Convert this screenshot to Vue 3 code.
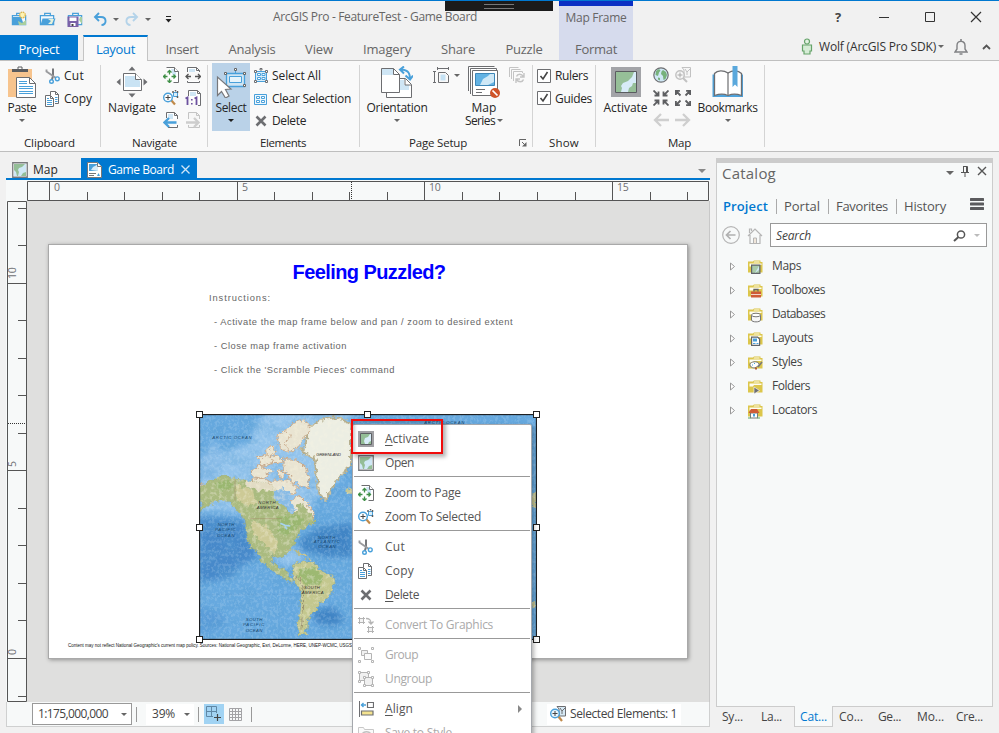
<script setup>
// Tracks a label so that it spans the given width in pixels.
const vFit = {
  mounted(el, { value }) {
    const n = el.textContent.trim().length
    const w = el.getBoundingClientRect().width
    el.style.letterSpacing = ((value - w) / n).toFixed(3) + 'px'
  },
}

const tabs = [
  { t: 'Insert', w: 68, f: 33 },
  { t: 'Analysis', w: 72, f: 47 },
  { t: 'View', w: 62, f: 28 },
  { t: 'Imagery', w: 74, f: 48 },
  { t: 'Share', w: 68, f: 34 },
  { t: 'Puzzle', w: 64, f: 37 },
]
const hTicks = [49, 87, 124, 162, 199, 237, 274, 312, 349, 387, 424, 462, 499, 537, 575, 612, 650, 687]
const vTicks = [208, 245, 283, 320, 358, 395, 433, 470, 508, 545, 583, 620, 658, 696]
const hMajor = [49, 237, 424, 612]
const vMajor = [283, 470, 658]
const hLabels = [[54, '0'], [242, '5'], [429, '10'], [617, '15']]
const vLabels = [[279, '10'], [467, '5'], [655, '0']]

const tree = [
  { t: 'Maps', i: 'maps', f: 29 },
  { t: 'Toolboxes', i: 'tbx', f: 53 },
  { t: 'Databases', i: 'db', f: 53 },
  { t: 'Layouts', i: 'lay', f: 41 },
  { t: 'Styles', i: 'sty', f: 30 },
  { t: 'Folders', i: 'fol', f: 38 },
  { t: 'Locators', i: 'loc', f: 45 },
]
const catTabs = [
  { t: 'Project', f: 45, on: true },
  { t: 'Portal', f: 36 },
  { t: 'Favorites', f: 52 },
  { t: 'History', f: 42 },
]
const dockTabs = [
  { t: 'Sy...', f: 21 },
  { t: 'La...', f: 21 },
  { t: 'Cat...', f: 27, on: true },
  { t: 'Co...', f: 24 },
  { t: 'Ge...', f: 23 },
  { t: 'Mo...', f: 27 },
  { t: 'Cre...', f: 27 },
]
const menu = [
  { k: 'A', t: 'ctivate', i: 'act', f: 44 },
  { t: 'Open', i: 'mapdoc', f: 29 },
  { sep: true },
  { t: 'Zoom to Page', i: 'zpage', f: 76 },
  { t: 'Zoom To Selected', i: 'zsel', f: 96 },
  { sep: true },
  { t: 'Cut', i: 'cut', f: 20 },
  { t: 'Copy', i: 'copy', f: 29 },
  { k: 'D', t: 'elete', i: 'del', f: 34 },
  { sep: true },
  { t: 'Convert To Graphics', i: 'conv', f: 108, off: true },
  { sep: true },
  { t: 'Group', i: 'grp', f: 33, off: true },
  { t: 'Ungroup', i: 'ungrp', f: 47, off: true },
  { sep: true },
  { k: 'A', t: 'lign', i: 'align', f: 28, sub: true },
  { t: 'Save to Style', i: 'save', f: 67, off: true },
]
const handles = [[199, 414], [367, 414], [536, 414], [199, 527], [536, 527], [199, 639], [536, 639]]
</script>

<template>
  <div class="app">
    <svg class="defs" width="0" height="0">
      <symbol id="cut" viewBox="0 0 16 16"><path d="M8 .5v7.500L6.800 12" fill="none" stroke="#77797c" stroke-width="2" /><path d="M1.500 1.500v2L11 10" fill="none" stroke="#9a9b9e" stroke-width="1.900" /><circle cx="12.300" cy="10.800" r="1.900" fill="#fff" stroke="#49a0da" stroke-width="1.400" /><circle cx="6.500" cy="13.500" r="1.800" fill="#fff" stroke="#49a0da" stroke-width="1.400" /></symbol>
      <symbol id="copy" viewBox="0 0 16 16"><path d="M5.500 4V.5h5l3 3v9H10" fill="#fff" stroke="#6d6e71" /><path d="M10.500.5v3h3" fill="none" stroke="#6d6e71" /><path d="M.5 4.500h5l3 3v8h-8z" fill="#fff" stroke="#6d6e71" /><path d="M5.500 4.500v3h3" fill="none" stroke="#6d6e71" /><path d="M2 7.500h2M2 9.500h5M2 11.500h5M2 13.500h5M10 6.500h2.500M10 8.500h2.500M10 10.500h2.500" stroke="#49a0da" /></symbol>
      <symbol id="del" viewBox="0 0 16 16"><path d="M3.500 3.500l9 9M12.500 3.500l-9 9" stroke="#6d6e71" stroke-width="2.600" /></symbol>
      <symbol id="zpage" viewBox="0 0 16 16"><path d="M3.500.5h8l4 4v11h-5" fill="#fff" stroke="#6d6e71" /><path d="M8 2h5v8h-3z" fill="#cfe6f5" /><path d="M11.500.5v4h4" fill="#fff" stroke="#6d6e71" /><path d="M6.500 4.500v10M1 9.500h11" stroke="#fff" stroke-width="3" fill="none" /><path d="M6.500 3.500v4M6.500 11.500v4M.5 9.500h4M8.500 9.500h4M4.500 5.500l2-2 2 2M4.500 13.500l2 2 2-2M2.500 7.500l-2 2 2 2M10.500 7.500l2 2-2 2" stroke="#3f8f46" stroke-width="1.300" fill="none" /></symbol>
      <symbol id="zwidth" viewBox="0 0 16 16"><path d="M2.500 5V.5h9l3 3V5M2.500 14v1.500h12V14" fill="#fff" stroke="#6d6e71" /><path d="M4 2h6v3H4z" fill="#cfe6f5" /><path d="M11.500.5v3h3" fill="none" stroke="#6d6e71" /><path d="M1 9.500h5M10 9.500h5.500M3.500 7L1 9.500 3.500 12M13 7l2.500 2.500L13 12" fill="none" stroke="#555" stroke-width="1.300" /></symbol>
      <symbol id="zsel" viewBox="0 0 16 16"><path d="M8 10l4 4.500" stroke="#c08a4a" stroke-width="2.200" /><circle cx="5" cy="7.500" r="4.300" fill="#fff" stroke="#49a0da" stroke-width="1.400" /><path d="M2.500 7.500h5M5 5v5" stroke="#444" /><path d="M10.500 2.500h4v4h-4z" fill="#d9edf9" stroke="#49a0da" /><path d="M9.500 1.500h1v1h-1zM14 1.500h1v1h-1zM14 6.500h1v1h-1zM12 .5h1v.5h-1z" fill="#fff" stroke="#555" stroke-width=".9" /></symbol>
      <symbol id="one" viewBox="0 0 16 16"><path d="M3.500 6V.5h9l3 3v12H13" fill="#fff" stroke="#6d6e71" /><path d="M5 2h6v4H5z" fill="#cfe6f5" /><path d="M12.500.5v3h3" fill="none" stroke="#6d6e71" /><path d="M.5 8.500l2-1V15M9.500 8.500l2-1V15" fill="none" stroke="#6c519f" stroke-width="1.800" /><path d="M6 9h1.600v1.600H6zM6 13h1.600v1.600H6z" fill="#6c519f" /></symbol>
      <symbol id="prev" viewBox="0 0 16 16"><path d="M3.500 6V.5h8l3 3V7M5 15.500h9.500V13" fill="#fff" stroke="#6d6e71" /><path d="M5 2h5v5H5z" fill="#cfe6f5" /><path d="M11.500.5v3h3" fill="none" stroke="#6d6e71" /><path d="M1.500 10.500h12M6 6l-4.500 4.500L6 15" fill="none" stroke="#49a0da" stroke-width="2.400" /></symbol>
      <symbol id="next" viewBox="0 0 16 16"><path d="M3.500 7V.5h8l3 3V7M3.500 13v2.500h11V13" fill="#f6f6f6" stroke="#c4c4c4" /><path d="M11.500.5v3h3" fill="none" stroke="#c4c4c4" /><path d="M1 10.500h12.500M9 6l4.500 4.500L9 15" fill="none" stroke="#cdcdcd" stroke-width="2.400" /></symbol>
      <symbol id="selall" viewBox="0 0 16 16"><path d="M2.500 3.500h11v10h-11z" fill="#d9edf9" stroke="#49a0da" /><path d="M4.500 5.500h3v2h-3zM9 5.500h3v2H9zM4.500 9.500h3v2h-3zM9 9.500h3v2H9z" fill="#fff" stroke="#49a0da" /><path d="M1.500 2.500h2v2h-2zM12.500 2.500h2v2h-2zM1.500 12.500h2v2h-2zM12.500 12.500h2v2h-2zM7 .5h2v1.500H7z" fill="#fff" stroke="#6d6e71" /></symbol>
      <symbol id="clr" viewBox="0 0 16 16"><path d="M1.500 3.500h12v10h-12z" fill="#eef7fd" stroke="#49a0da" /><path d="M3.500 5.500h3v2h-3zM8.500 5.500h3v2h-3zM3.500 9.500h3v2h-3zM8.500 9.500h3v2h-3z" fill="#fff" stroke="#49a0da" /></symbol>
      <symbol id="act" viewBox="0 0 16 16"><path d="M0 0h16v16H0z" fill="#a0a0a4" /><path d="M2.500 2.500h11v11h-11z" fill="#d9edf9" stroke="#5d6063" /><path d="M3 3h9l-2 3-3 1-1 3 1 3H3zM10 13l1-2 2-1v3z" fill="#94be97" /></symbol>
      <symbol id="mapdoc" viewBox="0 0 16 16"><path d="M.75.75h14.500v14.500H.75z" fill="#fff" stroke="#77797c" stroke-width="1.300" /><path d="M2 2h12v12H2z" fill="#d0e8f6" /><path d="M2 2h11l-3 3-3 1-1 2 1 2-1 4H5L4 10 2 8zM9 14l2-3 3-1v4z" fill="#94be97" /></symbol>
      <symbol id="conv" viewBox="0 0 16 16"><g fill="#f3f3f3" stroke="#b4b4b4"><path d="M1.500 1.500h4v4h-4zM10.500 10.500h4v4h-4z" /><path d="M0 1.500h7M0 5.500h7M1.500 0v7M5.500 0v7M9 10.500h7M9 14.500h7M10.500 9v7M14.500 9v7" /><path d="M8 1.500c4 0 5 1.500 5 5M10.500 4.500L13 7l2.500-2.500" fill="none" stroke-width="1.300" /></g></symbol>
      <symbol id="grp" viewBox="0 0 16 16"><g fill="#f0f0f0" stroke="#b4b4b4"><path d="M3.500 3.500h6v5h-6z" /><path d="M6.500 6.500h7v6h-7z" fill="#fafafa" /><path d="M.5.5h2v2h-2zM13.500.5h2v2h-2zM.5 13.500h2v2h-2zM13.500 13.500h2v2h-2z" fill="#fff" /></g></symbol>
      <symbol id="ungrp" viewBox="0 0 16 16"><g fill="#f0f0f0" stroke="#b4b4b4"><path d="M1.500 1.500h9v8h-9z" /><path d="M6.500 6.500h8v8h-8z" /><path d="M.5.5h2v2h-2zM9.500.5h2v2h-2zM.5 9.500h2v2h-2zM13.500 5.500h2v2h-2zM5.500 13.500h2v2h-2zM13.500 13.500h2v2h-2zM5.500 5.500h2v2h-2z" fill="#fff" /></g></symbol>
      <symbol id="align" viewBox="0 0 16 16"><path d="M1.500 0v16" stroke="#6d6e71" /><path d="M9.500 1.500h6v5h-6z" fill="#fff" stroke="#6d6e71" stroke-width="1.200" /><path d="M3.500 10h11.500v4H3.500z" fill="#f4e390" stroke="#6d6e71" stroke-width="1.200" /><path d="M3 4h5M5.500 2L3.500 4l2 2" fill="none" stroke="#49a0da" stroke-width="1.400" /></symbol>
      <symbol id="save" viewBox="0 0 16 16"><path d="M.5 14V2.500h5l1 2h9V14" fill="#fafafa" stroke="#c8c8c8" /><path d="M4 9c2-3 7-3 9 0" fill="none" stroke="#c0c0c0" stroke-width="1.500" /></symbol>
      <symbol id="selmap" viewBox="0 0 16 16"><path d="M7 .5h8.500V10H9V3z" fill="#d6e9f5" stroke="#6d6e71" /><path d="M10 2l2 3 3-3M12 5v3" fill="none" stroke="#6d6e71" /><path d="M8 10l4 5" stroke="#c08a4a" stroke-width="2.200" /><circle cx="5" cy="7.500" r="4.300" fill="#e9f5fc" stroke="#49a0da" stroke-width="1.400" /><path d="M2.500 7.500h5M5 5v5" stroke="#444" /></symbol>
      <symbol id="selmapoff" viewBox="0 0 16 16"><g fill="#f6f6f6" stroke="#c2c2c2"><path d="M7 .5h8.500V10H9V3z" /><path d="M10 2l2 3 3-3M12 5v3" fill="none" /><path d="M8 11l4 4" stroke-width="2" /><circle cx="5" cy="8" r="4.200" stroke-width="1.400" /><path d="M2.500 8h5M5 5.500v5" stroke="#aaa" /></g></symbol>
      <symbol id="globe" viewBox="0 0 16 16"><circle cx="8" cy="8" r="7.200" fill="#cfe7f5" stroke="#6d6e71" stroke-width="1.200" /><path d="M3 4l3-2 1.500 1.500-1.500 2-1 3.500-2.500-1zM10 3l3 2 1 3-1.500 4-2 1-.5-4-2-2 .500-2.500zM5 10.500l2 .5v2.500L5 12.500z" fill="#77b27c" /></symbol>
      <symbol id="zin" viewBox="0 0 16 16"><path d="M.5.5l5 5M15.500.5l-5 5M.5 15.500l5-5M15.500 15.500l-5-5M1.500 5.500h4v-4M14.500 5.500h-4v-4M1.500 10.500h4v4M14.500 10.500h-4v4" fill="none" stroke="#5d5e61" stroke-width="1.800" /></symbol>
      <symbol id="zout" viewBox="0 0 16 16"><path d="M1 1l4.500 4.500M15 1l-4.500 4.500M1 15l4.500-4.500M15 15l-4.500-4.500M.9 4.900v-4h4M15.100 4.900v-4h-4M.9 11.100v4h4M15.100 11.100v4h-4" fill="none" stroke="#5d5e61" stroke-width="1.800" /></symbol>
      <symbol id="left" viewBox="0 0 16 16"><path d="M2 8h14M8 2L2 8l6 6" fill="none" stroke="#cfcfcf" stroke-width="2.300" /></symbol>
      <symbol id="right" viewBox="0 0 16 16"><path d="M0 8h14M8 2l6 6-6 6" fill="none" stroke="#cfcfcf" stroke-width="2.300" /></symbol>
      <symbol id="margin" viewBox="0 0 17 16"><path d="M4 1.500h12M4.500 0v3M15.500 0v3M1.500 4v11M0 4.500h3M0 15.500h3M5.500 5.500h7l3 3v7h-10z" fill="none" stroke="#6d6e71" /><path d="M7.500 7.500h5v6h-5z" fill="#c6e2f4" /></symbol>
      <symbol id="refresh" viewBox="0 0 16 16"><g fill="#fafafa" stroke="#c4c4c4"><path d="M.5 10V.5h9M2.500 12V2.500h9M4.500 14V4.500h9V6" /><path d="M7.500 9.500c1-3 5-3 7 0M15 6v4h-4M14.500 12.500c-1 3-5 3-7 0M7 16v-4h4" fill="none" stroke-width="1.400" /></g></symbol>
      <symbol id="folder" viewBox="0 0 16 16"><path d="M1 2.500h5l1-1h6.500V3h2v10.500H1z" fill="#dcc64b" /><path d="M6.500 3.500l.8-1H12.500v1zM2.500 4.500h12V6H7L6 7.500H2.500z" fill="#fffdf0" /></symbol>
      <symbol id="maps" viewBox="0 0 16 16"><use href="#folder" /><path d="M4.600 6.100h8.300v8.300H4.600z" fill="#a9cba9" stroke="#60646a" stroke-width="1.200" /><path d="M12 7v4l-4 3z" fill="#cfe8f5" /></symbol>
      <symbol id="tbx" viewBox="0 0 16 16"><use href="#folder" /><path d="M4 8.500h10v6H4z" fill="#cf5c37" /><path d="M7 8.500v-2h4v2" fill="none" stroke="#666" stroke-width="1.300" /><path d="M4 11.500h10" stroke="#f2d4c8" /></symbol>
      <symbol id="db" viewBox="0 0 16 16"><use href="#folder" /><path d="M4.500 8v5c0 2.500 9 2.500 9 0V8" fill="#f6f6f6" stroke="#777" /><ellipse cx="9" cy="8" rx="4.500" ry="1.800" fill="#fff" stroke="#777" /></symbol>
      <symbol id="lay" viewBox="0 0 16 16"><use href="#folder" /><path d="M4.600 6.100h6l2 2v6.300h-8z" fill="#fff" stroke="#60646a" stroke-width="1.200" /><path d="M6 7.500h4v3H6z" fill="#49a0da" /><path d="M6 12.500h2.500M9.500 12.500h2" stroke="#49a0da" /></symbol>
      <symbol id="sty" viewBox="0 0 16 16"><use href="#folder" /><path d="M3 9.500c0-3 8-4 9-.500.500 3-2 1.500-2.500 3s-6.500 1.500-6.500-2.500z" fill="#fff" stroke="#777" /><path d="M15 7l-4 5" stroke="#777" stroke-width="1.500" /><path d="M8 12.500h2v2H8z" fill="#b25c35" /><path d="M5 9.500h1v1H5zM7 8h1v1H7z" fill="#49a0da" /></symbol>
      <symbol id="fol" viewBox="0 0 16 16"><use href="#folder" /><path d="M7 8l5.500 3.500L7 15z" fill="#6d6e71" stroke="#fff" stroke-width=".6" /></symbol>
      <symbol id="loc" viewBox="0 0 16 16"><use href="#folder" /><path d="M3.500 10h7v5h-7z" fill="#fff" stroke="#777" /><path d="M1.500 10L4 6h6l2.500 4z" fill="#cf5c37" /><path d="M6 11h2v2.500H6z" fill="#49a0da" /><path d="M1 15h3M10 15h3" stroke="#5fa765" stroke-width="1.200" /></symbol>
      <symbol id="brief" viewBox="0 0 18 16"><path d="M6 4.500V2h6v2.500" fill="none" stroke="#49a0da" stroke-width="1.300" /><path d="M1.500 4.500h14V14h-14z" fill="#f4f9fc" stroke="#49a0da" stroke-width="1.300" /></symbol>
    </svg>

    <header class="title">
      <div class="qat">
        <svg width="17" height="16"><use href="#brief" /><path d="M1 6h9l3 8H1z" fill="#49a0da" /><path d="M7 10l4 2 4-3v5H8z" fill="#a9cf9f" /><circle cx="11.500" cy="4" r="2.800" fill="#fdf3b4" stroke="#dfb548" stroke-width="1.300" stroke-dasharray="1.500 .7" /></svg>
        <svg width="17" height="16"><use href="#brief" /><path d="M3.500 7.500h13L14 14H1.500z" fill="#49a0da" /><path d="M9 8h6l-2 5H9l3-3z" fill="#e4f1dc" /></svg>
        <svg width="17" height="16"><use href="#brief" /><path d="M.5 5.500h11V16H.5z" fill="#7a62a8" /><path d="M2.500 6.500h7V10h-7zM3.500 12h5v3h-5z" fill="#fff" /><path d="M4.500 13h2v2h-2z" fill="#444" /><path d="M13 6l-1 3 3 4V6z" fill="#a9cf9f" /></svg>
        <svg width="14" height="14" class="undo"><path d="M2 5h6c6 0 6 8 .500 8M6 1L2 5l4 4" fill="none" stroke="#49a0da" stroke-width="1.900" /></svg>
        <i class="dn"></i>
        <svg width="14" height="14" class="redo"><path d="M12 5H6C0 5 0 13 5.500 13M8 1l4 4-4 4" fill="none" stroke="#b4d3e9" stroke-width="1.900" /></svg>
        <i class="dn"></i>
        <svg width="7" height="7" class="cust"><path d="M1 .5h5" stroke="#222" /><path d="M.5 3h6l-3 3.500z" fill="#222" /></svg>
      </div>
      <div class="caption"><span v-fit="204">ArcGIS Pro - FeatureTest - Game Board</span></div>
      <div class="win">
        <span class="help">?</span>
        <svg width="12" height="12"><path d="M1 6.500h10" stroke="#333" /></svg>
        <svg width="12" height="12"><path d="M1.500 1.500h9v9h-9z" fill="none" stroke="#333" /></svg>
        <svg width="12" height="12"><path d="M1 1l10 10M11 1L1 11" stroke="#333" stroke-width="1.200" /></svg>
      </div>
      <div class="grip"></div>
      <div class="context"><span v-fit="61">Map Frame</span></div>
    </header>

    <nav class="tabs">
      <div class="tab file"><span v-fit="41">Project</span></div>
      <div class="tab cur"><span v-fit="39">Layout</span></div>
      <div v-for="t in tabs" :key="t.t" class="tab" :style="{ width: t.w + 'px' }"><span v-fit="t.f">{{ t.t }}</span></div>
      <div class="tab format"><span v-fit="42">Format</span></div>
      <div class="user">
        <svg width="12" height="17"><circle cx="6" cy="3.500" r="2.500" fill="#e2f1e2" stroke="#66a36a" stroke-width="1.200" /><path d="M1.500 7h9v6h-1.500v3h-6v-3H1.500z" fill="#d6ecd6" stroke="#66a36a" stroke-width="1.200" /></svg>
        <span class="uname" v-fit="117">Wolf (ArcGIS Pro SDK)</span>
        <i class="dn"></i>
        <svg width="14" height="16" class="bell"><path d="M1 13h12l-2-3V6.500C11 1 3 1 3 6.500V10z" fill="none" stroke="#808184" stroke-width="1.400" /><path d="M5.500 15h3M7 0v2" stroke="#808184" stroke-width="1.600" /></svg>
        <svg width="9" height="6" class="caret"><path d="M1 5l3.500-3.500L8 5" fill="none" stroke="#555" stroke-width="1.800" /></svg>
      </div>
    </nav>

    <section class="ribbon">
      <div class="group g1">
        <div class="body">
          <div class="big paste">
            <svg width="30" height="32"><path d="M1 3h24v28H1z" fill="#f7c48e" /><path d="M5 3h16v3H5z" fill="#5b5c5f" /><path d="M11 3V1h4v2" fill="#fff" stroke="#5b5c5f" /><path d="M9.500 11.500h13l6 6v14h-19z" fill="#fff" stroke="#6d6e71" /><path d="M22.500 11.500v6h6" fill="none" stroke="#6d6e71" /><path d="M12 15.500h8M12 17.500h8M12 20.500h14M12 22.500h14M12 25.500h14M12 27.500h14" stroke="#49a0da" /></svg>
            <b v-fit="29">Paste</b><i class="dn"></i>
          </div>
          <div class="rows">
            <div><svg width="16" height="16"><use href="#cut" /></svg><span v-fit="20">Cut</span></div>
            <div><svg width="16" height="16"><use href="#copy" /></svg><span v-fit="28">Copy</span></div>
          </div>
        </div>
        <footer><span v-fit="51">Clipboard</span></footer>
      </div>
      <div class="group g2">
        <div class="body">
          <div class="big nav">
            <svg width="32" height="32"><path d="M7.500 7.500h12l6 6v11h-18z" fill="#fff" stroke="#6d6e71" /><path d="M9 10h10l5 5v6H9z" fill="#c9e3f4" /><path d="M19.500 7.500v6h6" fill="#fff" stroke="#6d6e71" /><path d="M12.500 4.500L16 .5l3.500 4zM12.500 27.500L16 31.500l3.500-4zM4.500 12.500L.5 16l4 3.500zM27.500 12.500l4 3.500-4 3.500z" fill="#6d6e71" /></svg>
            <b v-fit="48">Navigate</b>
          </div>
          <div class="icons">
            <svg v-for="i in ['zpage', 'zwidth', 'zsel', 'one', 'prev', 'next']" :key="i" width="16" height="16"><use :href="'#' + i" /></svg>
          </div>
        </div>
        <footer><span v-fit="45">Navigate</span></footer>
      </div>
      <div class="group g3">
        <div class="body">
          <div class="big sel">
            <svg width="32" height="32"><path d="M11.500 7.500h18v13h-18z" fill="#cfe5f4" stroke="#49a0da" stroke-width="1.300" /><path d="M14.500 10.500h12v6h-12z" fill="#e8f4fb" stroke="#49a0da" /><path d="M20.500 4v3" stroke="#49a0da" /><path d="M9.500 6.500h2v2h-2zM28.500 6.500h2v2h-2zM28.500 18.500h2v2h-2zM19.500 2.500h2v2h-2z" fill="#fff" stroke="#666" /><path d="M2.500 11v18.500l4-4 4 6.500 3.500-2-3.500-6.500 5.500-.5z" fill="#fff" stroke="#77787b" stroke-width="1.200" /></svg>
            <b v-fit="31">Select</b><i class="dn dark"></i>
          </div>
          <div class="rows">
            <div><svg width="16" height="16"><use href="#selall" /></svg><span v-fit="49">Select All</span></div>
            <div><svg width="16" height="16"><use href="#clr" /></svg><span v-fit="79">Clear Selection</span></div>
            <div><svg width="16" height="16"><use href="#del" /></svg><span v-fit="34">Delete</span></div>
          </div>
        </div>
        <footer><span v-fit="46">Elements</span></footer>
      </div>
      <div class="group g4">
        <div class="body">
          <div class="big orient">
            <svg width="32" height="32"><path d="M5.500 20v11.500h25v-13l-6-6h-7" fill="#fff" stroke="#6d6e71" /><path d="M19 14h4v5h5v5h-9z" fill="#cfe6f5" /><path d="M.5 2.500h12l6 6v18H.5z" fill="#fff" stroke="#6d6e71" /><path d="M1 3h11v6H1z" fill="#cfe6f5" /><path d="M12.500 2.500v6h6M24 13v6h6" fill="none" stroke="#6d6e71" /><path d="M20 3.500c7 .5 9 3 9 10M23 .5l-4 3 4 4M24.500 9.500l4.500 4L32 9.500" fill="none" stroke="#49a0da" stroke-width="2" /></svg>
            <b v-fit="61">Orientation</b><i class="dn"></i>
          </div>
          <div class="marg"><svg width="17" height="16"><use href="#margin" /></svg><i class="dn"></i></div>
          <div class="big series">
            <svg width="32" height="32"><path d="M.5 25V.5h26M2.500 28V2.500h26v2M4.500 4.500h25v25h-25z" fill="#fff" stroke="#6d6e71" /><path d="M7.500 7.500h19v12h-19z" fill="#62b2e3" stroke="#3e87b8" /><path d="M12 19l3-6 5-3 2-2h4v8l-6 3z" fill="#cfe8f6" /><path d="M8 23.500h9M8 26.500h6" stroke="#6d6e71" /><circle cx="27" cy="27" r="5" fill="#cf5328" /><path d="M24.500 24.500l5 5" stroke="#fff" stroke-width="1.700" /></svg>
            <b v-fit="25">Map</b><b class="two"><span v-fit="30">Series</span><i class="dn"></i></b>
          </div>
          <svg width="16" height="16" class="refr"><use href="#refresh" /></svg>
        </div>
        <footer><span v-fit="58">Page Setup</span><svg width="8" height="8" class="launch"><path d="M.5 7V.5H7M3 3l3 3" fill="none" stroke="#666" /><path d="M7.500 3v4.500H3z" fill="#666" /></svg></footer>
      </div>
      <div class="group g5">
        <div class="body">
          <div class="rows">
            <div><svg width="14" height="14" class="chk"><path d="M.5.5h13v13H.5z" fill="#fff" stroke="#6d6e71" /><path d="M3.500 7l2.500 3 4.500-7" fill="none" stroke="#444" stroke-width="1.600" /></svg><span v-fit="33">Rulers</span></div>
            <div><svg width="14" height="14" class="chk"><path d="M.5.5h13v13H.5z" fill="#fff" stroke="#6d6e71" /><path d="M3.500 7l2.500 3 4.500-7" fill="none" stroke="#444" stroke-width="1.600" /></svg><span v-fit="37">Guides</span></div>
          </div>
        </div>
        <footer><span v-fit="30">Show</span></footer>
      </div>
      <div class="group g6">
        <div class="body">
          <div class="big activate">
            <svg width="30" height="32" viewBox="0 0 30 32"><path d="M0 1h30v30H0z" fill="#a3a4a8" /><path d="M4.500 5.500h21v21h-21z" fill="#d8ecf8" stroke="#5a5c60" /><path d="M5 6h18l-2 5-4 4-5 2-2 3 1 2-1 4H5zM17 26l1-4 3-2 1-3h3v9z" fill="#96bf98" /></svg>
            <b v-fit="44">Activate</b>
          </div>
          <div class="icons">
            <svg v-for="i in ['globe', 'selmapoff', 'zin', 'zout', 'left', 'right']" :key="i" width="16" height="16"><use :href="'#' + i" /></svg>
          </div>
          <div class="big books">
            <svg width="32" height="32"><path d="M.5 8.500h4V28H28V8.500h3v22.500H.5z" fill="#4fa3dc" /><path d="M2.500 7.500c3-3.500 9-3.500 13.500-.5 4.500-3 10-3 13.500.5V29.500c-4-1.500-9-2-13.500 0-4.500-2-9-1.500-13.500 0z" fill="#fff" stroke="#6d6e71" stroke-width="1.300" /><path d="M16 7v22" stroke="#6d6e71" stroke-width="1.200" /><path d="M20.500 0h5v21l-2.500-2.500-2.500 2.500z" fill="#5aa8dc" /></svg>
            <b v-fit="60">Bookmarks</b><i class="dn"></i>
          </div>
        </div>
        <footer><span v-fit="23">Map</span></footer>
      </div>
    </section>

    <main>
      <section class="doc">
        <div class="doctabs">
          <div class="dt"><svg width="16" height="16"><use href="#mapdoc" /></svg><span v-fit="25">Map</span></div>
          <div class="dt on"><svg width="16" height="16"><path d="M.5.5h10l4 4v11H.5z" fill="#fff" stroke="#777" /><path d="M2 2h9v7H2z" fill="#49a0da" /><path d="M4 8l2-3 2-1 3-2v7z" fill="#d6ebf8" /><path d="M10.500.5v4h4" fill="#fff" stroke="#777" /><path d="M2 11.500h7M2 13.500h5" stroke="#777" /><path d="M10 14l1.500-3 1.500 3z" fill="#49a0da" /></svg><span v-fit="66">Game Board</span><svg width="9" height="9" class="x"><path d="M.5.5l8 8M8.500.5l-8 8" stroke="#cfe6f7" stroke-width="1.300" /></svg></div>
          <i class="dn more"></i>
        </div>
        <div class="view">
          <svg class="hruler" width="704" height="21" viewBox="6 180 704 21">
            <rect x="6" y="180" width="704" height="21" fill="#f7f9f9" />
            <path d="M27.500 181.500h681v19h-681z" fill="none" stroke="#555" />
            <path v-for="x in hTicks" :key="x" :d="`M${x + 0.5} ${hMajor.includes(x) ? 181 : 192}V200`" stroke="#555" />
            <path d="M351.500 182v18" stroke="#333" stroke-dasharray="1 1" />
            <text v-for="l in hLabels" :key="l[0]" :x="l[0]" y="191" class="rl">{{ l[1] }}</text>
          </svg>
          <div class="mid">
            <svg class="vruler" width="21" height="501" viewBox="6 201 21 501">
              <rect x="6" y="201" width="21" height="501" fill="#f7f9f9" />
              <path d="M7.500 201.500h19v500h-19z" fill="none" stroke="#555" />
              <path v-for="y in vTicks" :key="y" :d="`M${vMajor.includes(y) ? 8 : 18} ${y + 0.5}H26`" stroke="#555" />
              <path d="M8 423.500h18" stroke="#333" stroke-dasharray="1 1" />
              <text v-for="l in vLabels" :key="l[0]" :transform="`translate(16 ${l[0]}) rotate(-90)`" class="rl">{{ l[1] }}</text>
            </svg>
            <div class="canvas">
              <article class="page">
                <h1><span v-fit="153">Feeling Puzzled?</span></h1>
                <p class="first"><span v-fit="62">Instructions:</span></p>
                <p><span v-fit="299">- Activate the map frame below and pan / zoom to desired extent</span></p>
                <p><span v-fit="133">- Close map frame activation</span></p>
                <p><span v-fit="181">- Click the 'Scramble Pieces' command</span></p>
                <svg class="map" width="338" height="226" viewBox="28 42 1014 678" preserveAspectRatio="none">
                  <defs>
                    <filter id="sea" x="0" y="0" width="100%" height="100%"><feTurbulence type="fractalNoise" baseFrequency="0.02 0.03" numOctaves="6" seed="8" /><feColorMatrix values="0 0 0 0 .1  0 0 0 0 .35  0 0 0 0 .65  5 0 0 0 -2.200" /></filter>
                    <filter id="foam" x="0" y="0" width="100%" height="100%"><feTurbulence type="fractalNoise" baseFrequency="0.12 0.1" numOctaves="3" seed="21" /><feColorMatrix values="0 0 0 0 .75  0 0 0 0 .88  0 0 0 0 .98  0 5 0 0 -2.300" /></filter>
                    <filter id="land" x="-5%" y="-5%" width="110%" height="110%"><feTurbulence type="fractalNoise" baseFrequency="0.08" numOctaves="4" seed="3" result="n" /><feDisplacementMap in="SourceGraphic" in2="n" scale="20" xChannelSelector="R" yChannelSelector="G" result="d" /><feColorMatrix in="n" values="0 0 0 0 .95  0 0 0 0 .92  0 0 0 0 .75  0 0 4 0 -1.900" result="s" /><feComposite in="s" in2="d" operator="in" result="t" /><feComponentTransfer in="t" result="u"><feFuncA type="linear" slope=".28" /></feComponentTransfer><feMerge><feMergeNode in="d" /><feMergeNode in="u" /></feMerge></filter>
                    <filter id="soft"><feGaussianBlur stdDeviation="9" /></filter>
                  </defs>
                  <rect x="28" y="42" width="1014" height="678" fill="#67a9df" />
                  <g filter="url(#soft)">
                    <path d="M28 340q80-20 150 10l30 90 80 60 60-20-60-60 60-60 40-80 60-40 20-150 40-80H260l-60 60-20 60-60 20-92 30z" fill="#94c4ec" />
                    <path d="M28 350l130 10 50 110-60 30-20 30-100 20z" fill="#4789ca" />
                    <path d="M330 420l60-40 98-10v100l-80 0-70-20z" fill="#4184c5" />
                    <path d="M370 630l60-10 38 40-40 20-50-10z" fill="#4184c5" />
                    <path d="M28 180l50-60 20 60-30 60-40 0z" fill="#8bbde8" />
                    <path d="M28 620l70 20 10 40-80 20z" fill="#5a9cd8" />
                  </g>
                  <rect x="28" y="42" width="1014" height="678" filter="url(#sea)" opacity=".24" />
                  <rect x="28" y="42" width="1014" height="678" filter="url(#foam)" opacity=".16" />
                  <path d="M28 262h460M28 448h460M28 583h460" stroke="#4b83b5" stroke-dasharray="8 5" opacity=".6" />
                  <g filter="url(#land)" stroke-linejoin="round">
                    <path d="M348 90q50-45 100-36l36 18v124l-30 30-24 30-22 46-18-20-10-54-4-50-40-24 14-30z" fill="#eceee3" stroke="#b6af8e" stroke-width="6" />
                    <g fill="#e9e4d2" stroke="#c9a989" stroke-width="3">
                      <path d="M292 84l36-25 30 8 2 30-22 20-12 28-24 12-20-22 16-20-18-14z" />
                      <path d="M262 110l24-20 14 20-14 20 8 24-24-8zM228 150l20-12 12 20-30 14zM206 170l28-4 16 20-34 14zM240 168l30-2 10 22-34 4zM184 210l30-16 34 20-26 22-34-6zM188 234l40 2 20 12-50 8z" />
                      <path d="M284 174l34 6 30 24 12 30-6 30-34-16-20 6 4-24-22-16zM262 208l22 6-10 22z" />
                      <path d="M236 244l60-2 30 20-10 18-44 6-24-20z" />
                      <path d="M308 300l20-14 30 28 20 32-34 12-30-20-16-30z" />
                      <path d="M30 250l16 4 6 20-22-8z" />
                    </g>
                    <path d="M66 244l30-18 44 12 60 6 40 8 20 18 28 16-4 28 20 30 16-8 10-30 22 24 28 38-30 10-22 24-14 30-20 22-12 12-16 6-20-10 4 30 22 10 14 0 4 20 22 18-6 10-30-20-30-20-28-24-18-36-20-10-12-50-4-30-30-40-20-16-40 0-40 26-24 6 30-20-14-20 2-20-14-10z" fill="#aabb80" stroke="#98a56f" stroke-width="1.500" />
                    <path d="M140 254l50 20 10 34-30 10-30-22zM186 366l40 8 40 50-10 40-50-50-20-24z" fill="#cdca96" />
                    <path d="M170 240l70 10 20 20-50 2-40-10z" fill="#e2dcc4" />
                    <path d="M262 350l60-6 24 16-30 30-30 20-20-10zM74 250l40-10 20 20-40 16z" fill="#9ab770" />
                    <path d="M252 274l20-10 30 10-6 24 20 30-6 10-20-20-20-6-14-16z" fill="#87bbe5" />
                    <path d="M312 492l26-10 40 6 10 20 46 24 2 20-20 40-26 20-12 20-16 14-10 24-4 26 8 8-28 0-4-30 8-60 4-40-24-34-4-24z" fill="#c3c78e" stroke="#98a56f" stroke-width="1.500" />
                    <path d="M332 506l44-6 24 28-10 26-40 4-26-30z" fill="#9db972" />
                    <path d="M318 520l24 46 0 50-8 70" stroke="#978c6a" stroke-width="3" fill="none" />
                    <path d="M290 450l30 2 14 10M324 464l24 4 12 12" stroke="#b9b982" stroke-width="5" fill="none" />
                    <path d="M468 264l22 4v14l-18-2zM1022 282l20-8v50l-18-4zM1024 600l16 10-14 16z" fill="#c6c794" />
                  </g>
                  <path d="M136 238v64M182 356h96" stroke="#a27f62" stroke-width="1.500" opacity=".8" fill="none" />
                  <path d="M272 370l14 6 16 2M286 380l6 8" stroke="#a7d3ef" stroke-width="5" fill="none" />
                  <g class="maplbl">
                    <text x="68" y="116" textLength="118">ARCTIC OCEAN</text>
                    <text x="380" y="167" textLength="74" class="dk">GREENLAND</text>
                    <text x="206" y="313" textLength="52" class="dk">NORTH</text><text x="201" y="327" textLength="66" class="dk">AMERICA</text>
                    <text x="84" y="377" textLength="50">NORTH</text><text x="76" y="394" textLength="62">PACIFIC</text><text x="82" y="412" textLength="52">OCEAN</text>
                    <text x="385" y="416" textLength="52">NORTH</text><text x="372" y="430" textLength="78">ATLANTIC</text><text x="386" y="445" textLength="52">OCEAN</text>
                    <text x="343" y="568" textLength="48" class="dk">SOUTH</text><text x="336" y="581" textLength="66" class="dk">AMERICA</text>
                    <text x="168" y="662" textLength="50">SOUTH</text><text x="160" y="679" textLength="64">PACIFIC</text><text x="168" y="696" textLength="50">OCEAN</text>
                    <text x="704" y="73" textLength="120">ARCTIC OCEAN</text>
                  </g>
                  <rect x="29.500" y="43.500" width="1011" height="675" fill="none" stroke="#1d1f22" stroke-width="4" />
                </svg>
                <div class="credit"><span v-fit="342">Content may not reflect National Geographic's current map policy. Sources: National Geographic, Esri, DeLorme, HERE, UNEP-WCMC, USGS, NASA, ESA, METI, NRCAN</span></div>
              </article>
            </div>
          </div>
        </div>
        <div class="status">
          <div class="scale"><span v-fit="70">1:175,000,000</span><i class="dn"></i></div>
          <hr>
          <div class="pct"><span v-fit="23">39%</span><i class="dn"></i></div>
          <hr>
          <div class="snap"><svg width="20" height="20"><path d="M2.500 2.500h10v10h-10zM7.500 2.500v10M2.500 7.500h10" fill="none" stroke="#5f88a6" /><path d="M9 9h8v8H9z" fill="#a1d3f3" /><path d="M13.500 10v7M10 13.500h7" stroke="#444" stroke-width="1.200" /></svg></div>
          <svg width="13" height="13" class="grid"><path d="M.5.5h12v12H.5zM3.500 0v13M6.500 0v13M9.500 0v13M0 3.500h13M0 6.500h13M0 9.500h13" fill="none" stroke="#a3a3a6" /></svg>
          <hr>
          <div class="count"><svg width="16" height="16"><use href="#selmap" /></svg><span v-fit="107">Selected Elements: 1</span></div>
        </div>
      </section>

      <aside>
        <div class="panel">
          <div class="ptitle"><span v-fit="54">Catalog</span>
            <i class="dn"></i>
            <svg width="8" height="11"><path d="M2 .5h4.500v6M2.500 0v7M0 6.500h8M4 7v4M5.500 1v6" fill="none" stroke="#555" /></svg>
            <svg width="10" height="10"><path d="M1 1l8 8M9 1L1 9" stroke="#555" stroke-width="1.400" /></svg>
          </div>
          <div class="ptabs">
            <span v-for="c in catTabs" :key="c.t" class="pt" :class="{ on: c.on }"><span v-fit="c.f">{{ c.t }}</span></span>
            <svg width="14" height="14"><path d="M1 2.500h12M1 7h12M1 11.500h12" stroke="#5b5b5e" stroke-width="3" stroke-linecap="round" /></svg>
          </div>
          <div class="psearch">
            <svg width="18" height="18"><circle cx="9" cy="9" r="8.300" fill="none" stroke="#b5b5b5" stroke-width="1.200" /><path d="M4.500 9h9M8.500 5l-4 4 4 4" fill="none" stroke="#b0b0b0" stroke-width="1.700" /></svg>
            <svg width="16" height="17" class="home"><path d="M1 9l7-7 7 7M3 8v8.500h10V8M2.500 6V2h2v2" fill="none" stroke="#b5b5b5" stroke-width="1.200" /><path d="M6.500 16v-5h3v5" fill="#f0e6da" stroke="#b5b5b5" /></svg>
            <div class="box"><em v-fit="35">Search</em><svg width="13" height="12"><circle cx="8" cy="4.500" r="3.600" fill="none" stroke="#555" stroke-width="1.500" /><path d="M5.500 7L1 11" stroke="#555" stroke-width="2" /></svg><i class="dn light"></i></div>
          </div>
          <ul>
            <li v-for="n in tree" :key="n.t">
              <svg width="6" height="9"><path d="M.5 1v7l4-3.500z" fill="#fff" stroke="#999" /></svg>
              <svg width="16" height="16" class="ti"><use :href="'#' + n.i" /></svg>
              <span v-fit="n.f">{{ n.t }}</span>
            </li>
          </ul>
        </div>
        <div class="dock">
          <div v-for="d in dockTabs" :key="d.t" :class="{ on: d.on }"><span v-fit="d.f">{{ d.t }}</span></div>
        </div>
      </aside>
    </main>

    <i v-for="h in handles" :key="h.join()" class="handle" :style="{ left: h[0] - 4 + 'px', top: h[1] - 3 + 'px' }"></i>

    <div class="menu">
      <template v-for="(m, n) in menu" :key="n">
        <div v-if="m.sep" class="sep"></div>
        <div v-else class="mi" :class="{ off: m.off }">
          <svg width="16" height="16"><use :href="'#' + m.i" /></svg>
          <span v-fit="m.f"><u v-if="m.k">{{ m.k }}</u>{{ m.t }}</span>
          <i v-if="m.sub" class="sub"></i>
        </div>
      </template>
    </div>
    <div class="mark"></div>
  </div>
</template>

<style>
body { overflow: hidden; }
</style>

<style scoped>
* { box-sizing: border-box; }
.app { position: relative; display: flex; flex-direction: column; width: 999px; height: 733px; overflow: hidden; background: #f1f1f1; border-top: 1px solid #0078d0; font: 12px/16px "Open Sans", "Noto Sans", sans-serif; color: #262626; white-space: nowrap; }
svg { display: block; flex: none; }
.defs { position: absolute; }
i { flex: none; }
.dn { width: 0; height: 0; border: 3px solid transparent; border-top: 3px solid #666; border-bottom: 0; }
.dn.dark { border-top-color: #1e1e1e; }
.dn.light { border-top-color: #bbb; }

.title { position: relative; display: flex; height: 34px; }
.qat { display: flex; width: 273px; align-items: center; padding: 2px 0 0 11px; }
.qat svg + svg { margin-left: 11px; }
.qat .undo { margin-left: 9px !important; }
.undo + .dn { margin: 0 6px; }
.redo + .dn { margin: 0 0 0 6px; }
.cust { margin-left: 14px; }
.caption { padding-top: 8px; color: #666; }
.win { margin-left: auto; display: flex; align-items: center; gap: 34px; padding: 0 17px 3px 0; }
.help { font-weight: 700; font-size: 13px; width: 9px; color: #444; }
.grip { position: absolute; left: 445px; top: -1px; width: 108px; height: 11px; background: #1b1b1b; }
.grip::after { content: ""; position: absolute; left: 39px; top: 4px; width: 30px; height: 3px; border: solid #777; border-width: 1px 0; }
.context { position: absolute; left: 559px; top: 0; width: 74px; height: 34px; background: #d6dbed; border-top: 5px solid #0a2fc4; text-align: center; padding-top: 4px; color: #666; }

.tabs { display: flex; height: 26px; font-size: 13px; color: #666; border-bottom: 1px solid #c0c0c0; }
.tab { display: flex; align-items: center; justify-content: center; padding-top: 3px; }
.file { width: 78px; background: #0078d0; color: #fff; margin-right: 5px; }
.cur { width: 65px; height: 26px; margin-bottom: -1px; background: #f9f9f9; border: 1px solid #c4c4c4; border-top: 2px solid #0078d0; border-bottom: 0; color: #0078d0; padding-top: 0; }
.format { width: 74px; margin-left: 3px; background: #d6dbed; }
.user { margin-left: auto; display: flex; align-items: center; width: 198px; font-size: 12px; color: #333; padding-bottom: 2px; }
.uname { margin-left: 6px; }
.user .dn { margin-left: 2px; }
.bell { margin-left: 10px; }
.caret { margin-left: 14px; }

.ribbon { display: flex; height: 91px; background: #f9f9f9; border-bottom: 1px solid #bebebe; padding-top: 2px; }
.group { position: relative; display: flex; flex-direction: column; height: 88px; }
.group::after { content: ""; position: absolute; right: 0; top: 2px; bottom: 4px; width: 1px; background: #d4d4d4; }
.g1 { width: 101px; padding-left: 2px; }
.g2 { width: 107px; }
.g3 { width: 152px; padding-left: 4px; }
.g4 { width: 173px; padding-left: 4px; }
.g5 { width: 63px; padding-left: 4px; }
.g6 { width: 169px; }
.body { display: flex; height: 71px; flex: none; }
footer { display: flex; flex: none; justify-content: center; align-items: center; height: 17px; font-size: 11.5px; }
.g1 footer, .g3 footer, .g5 footer { padding-right: 4px; }
.g3 footer { padding-right: 6px; }
.g4 footer { position: relative; padding-right: 21px; }
.g5 footer { padding-right: 5px; }
.g6 footer { padding-right: 2px; }
.launch { position: absolute; right: 6px; top: 5px; }
.big { display: flex; flex-direction: column; align-items: center; height: 68px; padding-top: 3px; }
.big svg { margin-bottom: 2px; }
.big b { font-weight: 400; line-height: 16px; }
.big > .dn { margin-top: 3px; }
.paste { width: 40px; }
.nav { width: 62px; }
.sel { width: 38px; background: #bad2e8; }
.orient { width: 66px; }
.series { width: 44px; margin-left: 1px; }
.series b { line-height: 13px; margin-top: 1px; }
.big .two { display: flex; align-items: center; gap: 2px; margin-top: 0; }
.activate { width: 59px; }
.books { width: 71px; margin-left: -5px; }
.rows { display: flex; flex-direction: column; padding-top: 2px; margin-left: 3px; }
.g3 .rows { margin-left: 3px; }
.g5 .rows { margin-left: 0; }
.rows > div { display: flex; align-items: center; height: 22.4px; gap: 3px; }
.chk { margin-right: 1px; margin-top: -1px; }
.icons { display: grid; grid-template-columns: 22px 22px; grid-auto-rows: 22.5px; align-content: start; padding-top: 4px; }
.g6 .icons { margin-left: -2px; }
.marg { display: flex; gap: 4px; align-items: center; height: 24px; width: 28px; margin-left: 3px; }
.refr { margin: 4px 0 0 3px; }

main { display: flex; flex: 1; min-height: 0; padding-top: 6px; }
.doc { display: flex; flex-direction: column; width: 704px; margin-left: 6px; }
.doctabs { display: flex; align-items: flex-end; height: 22px; border-bottom: 2px solid #0078d0; }
.dt { display: flex; align-items: center; height: 20px; width: 75px; padding: 3px 0 0 6px; gap: 5px; }
.dt.on { width: 116px; background: #0078d0; color: #fff; gap: 5px; }
.x { margin-left: 2px; }
.more { margin: 0 4px 5px auto; border-width: 4px; border-bottom-width: 0; border-top-color: #888; }
.view { height: 522px; flex: none; }
.mid { display: flex; }
.rl { font-size: 10.500px; fill: #6e6e72; letter-spacing: -.3px; }
.canvas { flex: 1; height: 501px; padding: 43px 0 0 21px; background: #dfdfde; border-right: 1px solid #c8c8c8; }
.page { width: 640px; height: 415px; background: #fff; border: 1px solid #a9a9a9; box-shadow: 1px 1px 4px rgba(0, 0, 0, .35); font-family: "Liberation Sans", Arial, sans-serif; position: relative; }
h1 { margin: 14px 0 1px 2px; text-align: center; font-size: 20px; line-height: 26px; color: #00f; }
.page p { margin: 0 0 0 165px; height: 24px; line-height: 24px; font-size: 9.300px; color: #666; }
.page p.first { margin-left: 160px; padding-top: 0; }
.map { position: absolute; left: 150px; top: 169px; }
.maplbl text { font: italic 13px "Liberation Sans", Arial, sans-serif; fill: #17476f; }
.maplbl .dk { fill: #333; }
.credit { position: absolute; left: 19px; top: 397px; font-size: 4.500px; line-height: 8px; color: #111; }
.status { display: flex; align-items: center; height: 25px; flex: none; background: #f7f9f9; border: 1px solid #cfd0d0; border-top: 0; padding-left: 25px; color: #444; }
.scale { display: flex; align-items: center; justify-content: space-between; width: 100px; height: 22px; border: 1px solid #999; background: #fff; padding: 0 4px 0 5px; }
hr { width: 1px; height: 15px; border: 0; background: #999; margin: 0 0 0 4px; }
.pct { display: flex; align-items: center; justify-content: space-between; width: 48px; height: 21px; background: #fff; padding: 0 4px 0 6px; margin-left: 9px; }
.snap { width: 20px; height: 20px; background: #a1d3f3; margin-left: 5px; }
.grid { margin-left: 5px; margin-right: 5px; }
.grid + hr { margin-left: 4px; }
.count { display: flex; align-items: center; gap: 4px; margin: 0 28px 0 auto; padding: 0 4px 0 3px; height: 21px; background: #fff; }

aside { display: flex; flex-direction: column; width: 277px; margin-left: 6px; }
.panel { height: 549px; flex: none; background: #f7f9f9; border: 1px solid #ccc; border-top: 5px solid #ccc; }
.ptitle { display: flex; align-items: center; height: 20px; padding: 0 5px; font-size: 15px; color: #666; }
.ptitle .dn { margin: 0 7px 1px auto; border-width: 4px; border-bottom-width: 0; }
.ptitle svg { margin: 0 0 4px 0; }
.ptitle svg + svg { margin-left: 8px; }
.ptabs { display: flex; align-items: center; height: 40px; padding: 6px 8px 0 6px; font-size: 13px; color: #555; }
.pt { padding-right: 8px; line-height: 15px; }
.pt + .pt { padding-left: 7px; border-left: 1px solid #aaa; }
.pt.on { color: #0078d0; font-weight: 600; }
.ptabs svg { margin-left: auto; margin-bottom: 4px; }
.psearch { display: flex; align-items: center; height: 24px; padding-left: 5px; margin-bottom: 7px; }
.home { margin: 0 7px; }
.box { display: flex; align-items: center; width: 217px; height: 24px; background: #fff; border: 1px solid #999; padding: 1px 6px 0 5px; color: #444; }
.box svg { margin: 0 8px 0 auto; }
ul { list-style: none; margin: 0; padding: 0; color: #444; }
li { display: flex; align-items: center; height: 24px; padding-left: 13px; }
.ti { margin: 2px 9px 0 11px; }
.dock { display: flex; height: 22px; margin-top: -1px; font-size: 12px; }
.dock div { width: 39px; height: 21px; padding: 3px 0 0 6px; color: #444; }
.dock .on { background: #f7f9f9; border: 1px solid #ccc; border-top: 0; padding-left: 5px; color: #0078d0; }

.handle { position: absolute; width: 7px; height: 7px; margin: -1px 0 0 1px; background: #fff; border: 1px solid #222; }
.menu { position: absolute; left: 352px; top: 423px; width: 180px; height: 330px; padding-top: 2px; background: #fff; border: 1px solid #a5a8ad; border-radius: 2px; box-shadow: 2px 2px 4px rgba(0, 0, 0, .3); color: #555; }
.mi { display: flex; align-items: center; height: 24px; padding-left: 5px; }
.mi svg { margin-right: 11px; }
.mi.off { color: #aaa; }
.sep { height: 6px; padding-top: 1px; }
.sep::before { content: ""; display: block; height: 1px; margin: 0 1px; background: #999; }
.sub { margin: 0 9px 0 auto; border: 4px solid transparent; border-left-color: #888; border-right: 0; }
u { text-underline-offset: 2px; }
.mark { position: absolute; left: 351px; top: 418px; width: 92px; height: 35px; border: 2px solid #f00c0c; box-shadow: 3px 3px 4px rgba(0, 0, 0, .3), inset 2px 2px 3px rgba(0, 0, 0, .2); }
</style>
